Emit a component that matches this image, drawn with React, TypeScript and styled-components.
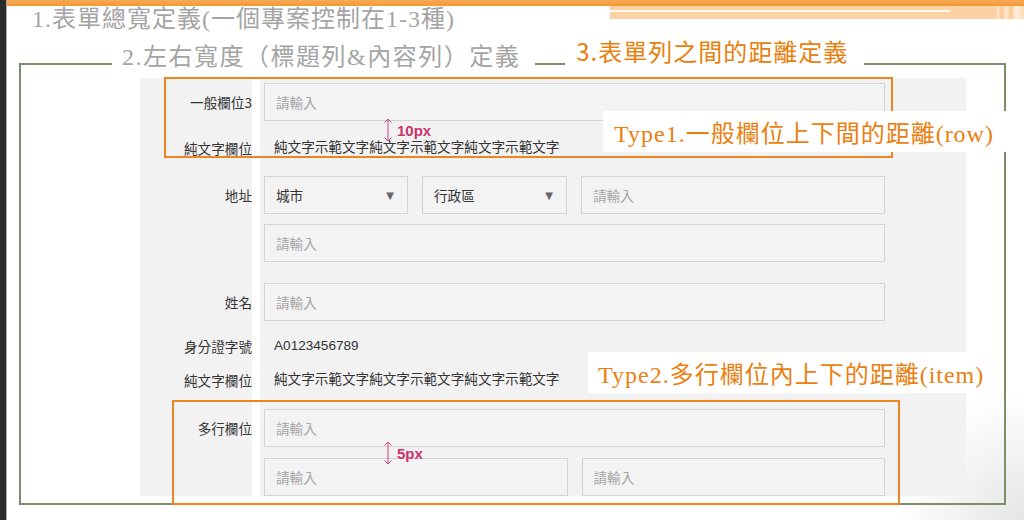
import React from "react";
import styled, { createGlobalStyle } from "styled-components";

const GlobalStyle = createGlobalStyle`
  html, body {
    margin: 0;
    padding: 0;
    background: #fff;
  }
  body {
    font-family: "Noto Sans CJK TC", "Noto Sans", sans-serif;
  }
  * {
    box-sizing: border-box;
  }
`;

const SANS = `"Noto Sans CJK TC", "Noto Sans", sans-serif`;
const UI_SANS = `"Liberation Sans", "Noto Sans CJK TC", sans-serif`;
const SERIF_MIX = `"Liberation Serif", "Noto Sans CJK TC", serif`;

const GREEN = "#7d8e6d";
const ORANGE = "#ee8520";
const PINK = "#c8336b";

const Screen = styled.div`
  width: 1024px;
  height: 520px;
  display: flex;
  overflow: hidden;
  background: #fff;
`;

const SideBar = styled.div`
  flex: none;
  width: 7px;
  background: #2b2b2b;
  border-right: 1px solid #a8a8a8;
`;

const Slide = styled.div`
  flex: 1;
  display: flex;
  flex-direction: column;
  background: radial-gradient(
    circle at 100% 100%,
    rgba(0, 0, 0, 0.1) 0,
    rgba(0, 0, 0, 0) 130px
  );
`;

const TopStripe = styled.div`
  height: 6px;
  background: linear-gradient(#f8aa58, #f39934);
`;

const HeaderRow = styled.div`
  display: flex;
  align-items: flex-start;
  height: 26px;
`;

const PageTitle = styled.h1`
  margin: 0 0 0 25px;
  font-family: ${SERIF_MIX};
  font-weight: 400;
  font-size: 24px;
  line-height: 26px;
  letter-spacing: 1px;
  color: #a4a4a4;
  white-space: nowrap;
`;

const PaleBand = styled.div`
  margin-left: auto;
  width: 414px;
  height: 13px;
  background-color: #fcd2a5;
  background-image: linear-gradient(#fff6ec, #fff6ec),
    linear-gradient(
      to right,
      transparent 0 386px,
      #fde6cc 388px,
      #fbc58e 392px,
      #fee9d3 396px,
      #fbc996 401px,
      #fff0e0 406px,
      #fcd9b3 414px
    );
  background-size: 340px 2px, 100% 100%;
  background-position: 0 4px, 0 0;
  background-repeat: no-repeat;
`;

const Frame = styled.section`
  margin-left: 12px;
  width: 987px;
  display: flex;
  flex-direction: column;
`;

const FrameTop = styled.div`
  display: flex;
  align-items: flex-end;
  height: 33px;
  position: relative;
  z-index: 1;
`;

const Rule = styled.div<{ $width?: number }>`
  height: 2px;
  background: ${GREEN};
  flex: ${(p) => (p.$width ? `0 0 ${p.$width}px` : "1")};
`;

const SubTitle = styled.h2`
  margin: 0 15px -6px 10px;
  font-family: ${SERIF_MIX};
  font-weight: 400;
  font-size: 24px;
  line-height: 28px;
  letter-spacing: 1.5px;
  color: #a4a4a4;
  white-space: nowrap;
`;

const AccentTitle = styled.h2`
  margin: 0 16px 0 11px;
  font-family: ${SANS};
  font-weight: 400;
  font-size: 24px;
  line-height: 28px;
  letter-spacing: 1px;
  color: #e8800e;
  white-space: nowrap;
`;

const FrameBody = styled.div`
  position: relative;
  border: 2px solid ${GREEN};
  border-top: none;
  padding: 13px 38px 7px 119px;
`;

const Panel = styled.div`
  display: flex;
  flex-direction: column;
  height: 418px;
  padding-top: 5px;
  background: linear-gradient(
    to right,
    #f2f2f2 0 112px,
    #fff 112px 120px,
    #f2f2f2 120px
  );
`;

const Field = styled.div<{ $mt?: number }>`
  display: grid;
  grid-template-columns: 112px 1fr;
  column-gap: 12px;
  margin-top: ${(p) => p.$mt ?? 0}px;
`;

const Label = styled.div<{ $line: number }>`
  text-align: right;
  font-family: ${SANS};
  font-size: 13.6px;
  line-height: ${(p) => p.$line}px;
  color: #353535;
  white-space: nowrap;
`;

const Control = styled.div<{ $gap?: number }>`
  display: flex;
  flex-direction: column;
  gap: ${(p) => p.$gap ?? 0}px;
  padding-right: 81px;
`;

const Split = styled.div<{ $cols: string }>`
  display: grid;
  grid-template-columns: ${(p) => p.$cols};
  gap: 14px;
`;

const TextInput = styled.input`
  display: block;
  width: 100%;
  height: 38px;
  margin: 0;
  padding: 0 11px;
  border: 1px solid #d3d3d3;
  border-radius: 0;
  background: #f3f3f3;
  font-family: ${SANS};
  font-size: 13.6px;
  color: #333;
  outline: none;

  &::placeholder {
    color: #a6a6a6;
  }
`;

const SelectBox = styled.div`
  display: flex;
  align-items: center;
  justify-content: space-between;
  height: 38px;
  padding: 0 13px 0 11px;
  border: 1px solid #d3d3d3;
  background: #f3f3f3;
  font-family: ${SANS};
  font-size: 13.6px;
  color: #333;
`;

const Caret = styled.span`
  font-family: "DejaVu Sans", sans-serif;
  font-size: 10px;
  color: #666;
`;

const Value = styled.div`
  padding-left: 10px;
  font-family: ${UI_SANS};
  font-size: 13.6px;
  line-height: 34px;
  color: #333;
  white-space: nowrap;
`;

const Highlight = styled.div<{ $x: number; $y: number; $w: number; $h: number }>`
  position: absolute;
  left: ${(p) => p.$x}px;
  top: ${(p) => p.$y}px;
  width: ${(p) => p.$w}px;
  height: ${(p) => p.$h}px;
  border: 2px solid ${ORANGE};
  pointer-events: none;
`;

const Note = styled.div<{ $x: number; $y: number; $w: number; $pad: number }>`
  position: absolute;
  left: ${(p) => p.$x}px;
  top: ${(p) => p.$y}px;
  width: ${(p) => p.$w}px;
  height: 41px;
  display: flex;
  align-items: center;
  padding-left: ${(p) => p.$pad}px;
  background: #fff;
  font-family: ${SERIF_MIX};
  font-size: 24px;
  letter-spacing: 1px;
  color: #ea7f12;
  white-space: nowrap;
`;

const Marker = styled.div<{ $x: number; $y: number }>`
  position: absolute;
  left: ${(p) => p.$x}px;
  top: ${(p) => p.$y}px;
  display: flex;
  align-items: center;
  gap: 4px;
  font-family: ${UI_SANS};
  font-weight: 700;
  font-size: 15px;
  color: ${PINK};
`;

const GapArrow = () => (
  <svg width="10" height="24" viewBox="0 0 10 24" fill="none">
    <path
      d="M5 1V23M1.5 4.5L5 1L8.5 4.5M1.5 19.5L5 23L8.5 19.5"
      stroke="#c9477d"
      strokeWidth="1"
    />
  </svg>
);

const PLACEHOLDER = "請輸入";
const SAMPLE = "純文字示範文字純文字示範文字純文字示範文字";

export default function App() {
  return (
    <Screen>
      <GlobalStyle />
      <SideBar />
      <Slide>
        <TopStripe />
        <HeaderRow>
          <PageTitle>1.表單總寬定義(一個專案控制在1-3種)</PageTitle>
          <PaleBand />
        </HeaderRow>

        <Frame>
          <FrameTop>
            <Rule $width={93} />
            <SubTitle>2.左右寬度（標題列&amp;內容列）定義</SubTitle>
            <Rule $width={30} />
            <AccentTitle>3.表單列之間的距離定義</AccentTitle>
            <Rule />
          </FrameTop>

          <FrameBody>
            <Panel>
              <Field>
                <Label $line={38}>一般欄位3</Label>
                <Control>
                  <TextInput placeholder={PLACEHOLDER} />
                </Control>
              </Field>

              <Field $mt={10}>
                <Label $line={34}>純文字欄位</Label>
                <Control>
                  <Value>{SAMPLE}</Value>
                </Control>
              </Field>

              <Field $mt={11}>
                <Label $line={38}>地址</Label>
                <Control $gap={10}>
                  <Split $cols="144px 145px 1fr">
                    <SelectBox>
                      城市<Caret>▼</Caret>
                    </SelectBox>
                    <SelectBox>
                      行政區<Caret>▼</Caret>
                    </SelectBox>
                    <TextInput placeholder={PLACEHOLDER} />
                  </Split>
                  <TextInput placeholder={PLACEHOLDER} />
                </Control>
              </Field>

              <Field $mt={21}>
                <Label $line={38}>姓名</Label>
                <Control>
                  <TextInput placeholder={PLACEHOLDER} />
                </Control>
              </Field>

              <Field $mt={8}>
                <Label $line={34}>身分證字號</Label>
                <Control>
                  <Value>A0123456789</Value>
                </Control>
              </Field>

              <Field>
                <Label $line={34}>純文字欄位</Label>
                <Control>
                  <Value>{SAMPLE}</Value>
                </Control>
              </Field>

              <Field $mt={12}>
                <Label $line={38}>多行欄位</Label>
                <Control $gap={11}>
                  <TextInput placeholder={PLACEHOLDER} />
                  <Split $cols="1fr 1fr">
                    <TextInput placeholder={PLACEHOLDER} />
                    <TextInput placeholder={PLACEHOLDER} />
                  </Split>
                </Control>
              </Field>
            </Panel>

            <Highlight $x={143} $y={12} $w={729} $h={81} />
            <Note $x={582} $y={46} $w={405} $pad={11}>
              Type1.一般欄位上下間的距離(row)
            </Note>
            <Marker $x={362} $y={53}>
              <GapArrow />
              10px
            </Marker>

            <Note $x={567} $y={287} $w={405} $pad={10}>
              Type2.多行欄位內上下的距離(item)
            </Note>
            <Highlight $x={151} $y={335} $w={728} $h={105} />
            <Marker $x={362} $y={376}>
              <GapArrow />
              5px
            </Marker>
          </FrameBody>
        </Frame>
      </Slide>
    </Screen>
  );
}
